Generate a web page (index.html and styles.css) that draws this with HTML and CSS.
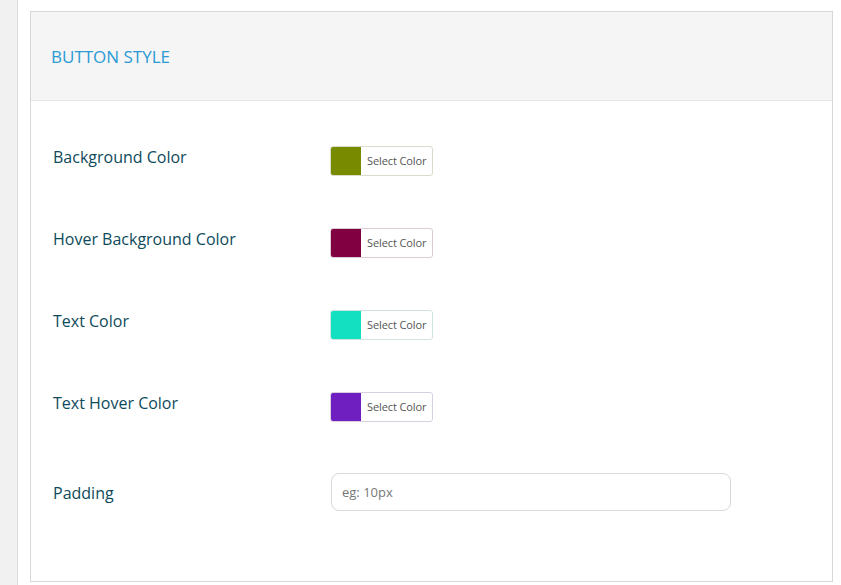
FILE: index.html
```html
<!DOCTYPE html>
<html lang="en">
<head>
<meta charset="utf-8">
<title>Button Style</title>
<link rel="stylesheet" href="styles.css">
</head>
<body>
<div class="layout">
  <aside class="sidebar"></aside>
  <main class="main">
    <section class="card">
      <header class="card-head">
        <h2 class="card-title">BUTTON STYLE</h2>
      </header>
      <div class="card-body">
        <div class="row">
          <label class="row-label">Background Color</label>
          <button class="color-btn" type="button" style="--c:#788a00"><span class="swatch"></span><span class="color-text">Select Color</span></button>
        </div>
        <div class="row">
          <label class="row-label">Hover Background Color</label>
          <button class="color-btn" type="button" style="--c:#800041"><span class="swatch"></span><span class="color-text">Select Color</span></button>
        </div>
        <div class="row">
          <label class="row-label">Text Color</label>
          <button class="color-btn" type="button" style="--c:#13dfc1"><span class="swatch"></span><span class="color-text">Select Color</span></button>
        </div>
        <div class="row">
          <label class="row-label">Text Hover Color</label>
          <button class="color-btn" type="button" style="--c:#6f1fbf"><span class="swatch"></span><span class="color-text">Select Color</span></button>
        </div>
        <div class="row row-input">
          <label class="row-label">Padding</label>
          <input class="text-input" type="text" placeholder="eg: 10px">
        </div>
      </div>
    </section>
  </main>
</div>
</body>
</html>
```

FILE: styles.css
```css
* { box-sizing: border-box; }
html, body { margin: 0; padding: 0; height: 100%; background: #fff; }
body {
  font-family: "Open Sans", "Noto Sans", sans-serif;
  overflow: hidden;
}
.layout { display: flex; height: 100%; }
.sidebar {
  width: 18px;
  flex: none;
  background: #f1f1f1;
  border-right: 1px solid #dcdcdc;
}
.main { flex: 1; padding: 11px 8px 0 12px; }
.card {
  width: 803px;
  border: 1px solid #d7d7d7;
  background: #fff;
}
.card-head {
  height: 89px;
  background: #f5f5f5;
  border-bottom: 1px solid #e8e8e8;
  display: flex;
  align-items: center;
  padding-left: 20px;
}
.card-title {
  margin: 0;
  font-weight: 400;
  font-size: 17px;
  color: #2b9ad4;
}
.card-body {
  height: 480px;
  padding: 45px 0 0 22px;
}
.row {
  display: grid;
  grid-template-columns: 277px 1fr;
  align-items: start;
  height: 82px;
}
.row-label {
  font-size: 16px;
  line-height: 20px;
  color: #0e4a5b;
  padding-top: 1px;
}
.color-btn {
  display: flex;
  align-items: stretch;
  width: 103px;
  height: 30px;
  padding: 0;
  border: 1px solid color-mix(in srgb, var(--c) 10%, #e4e4e4);
  border-radius: 3px;
  background: #fff;
  overflow: hidden;
  cursor: pointer;
  font-family: inherit;
}
.swatch {
  width: 30px;
  flex: none;
  background: var(--c);
}
.color-text {
  flex: 1;
  display: flex;
  align-items: center;
  padding: 0 0 2px 6px;
  font-size: 11px;
  color: #555;
  white-space: nowrap;
  letter-spacing: -0.1px;
}
.row-input {
  align-items: center;
  height: 38px;
  margin-top: -1px;
}
.row-input .row-label { padding-top: 2px; }
.text-input {
  width: 400px;
  height: 38px;
  margin-left: 1px;
  border: 1px solid #d9d9d9;
  border-radius: 8px;
  padding: 0 10px;
  font-family: inherit;
  font-size: 13px;
  color: #333;
  background: #fff;
  outline: none;
}
.text-input::placeholder { color: #777; }
```
